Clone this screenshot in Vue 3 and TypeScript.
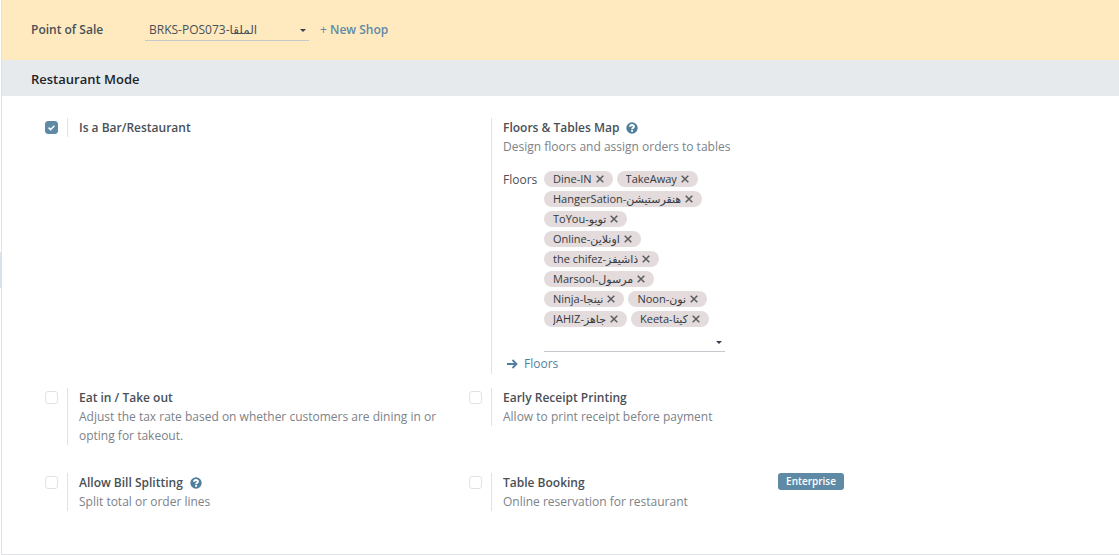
<script setup lang="ts">
import { ref } from 'vue'

interface Floor {
  id: number
  name: string
}

const shop = ref('BRKS-POS073-الملقا')
const isRestaurant = ref(true)
const eatIn = ref(false)
const earlyReceipt = ref(false)
const billSplitting = ref(false)
const tableBooking = ref(false)
const floorQuery = ref('')

const floors = ref<Floor[]>([
  { id: 1, name: 'Dine-IN' },
  { id: 2, name: 'TakeAway' },
  { id: 3, name: 'HangerSation-هنقرستيشن' },
  { id: 4, name: 'ToYou-تويو' },
  { id: 5, name: 'Online-اونلاين' },
  { id: 6, name: 'the chifez-ذاشيفز' },
  { id: 7, name: 'Marsool-مرسول' },
  { id: 8, name: 'Ninja-نينجا' },
  { id: 9, name: 'Noon-نون' },
  { id: 10, name: 'JAHIZ-جاهز' },
  { id: 11, name: 'Keeta-كيتا' },
])

function removeFloor(id: number) {
  floors.value = floors.value.filter((f) => f.id !== id)
}
</script>

<template>
  <div class="page">
    <span class="handle"></span>
    <main class="panel">
      <header class="shop-bar">
        <label class="shop-label" for="shop">Point of Sale</label>
        <div class="dropdown shop-select">
          <select id="shop" v-model="shop">
            <option>BRKS-POS073-الملقا</option>
          </select>
          <svg class="caret" viewBox="0 0 6 3"><path d="M0 0h6L3 3z" /></svg>
        </div>
        <button class="new-shop" type="button"><span class="plus">+</span> New Shop</button>
      </header>

      <h2 class="section-title">Restaurant Mode</h2>

      <div class="settings">
        <section class="setting">
          <input id="is-restaurant" v-model="isRestaurant" class="check" type="checkbox" />
          <div class="body">
            <label class="title" for="is-restaurant">Is a Bar/Restaurant</label>
          </div>
        </section>

        <section class="setting">
          <div class="body wide">
            <div class="title">
              Floors &amp; Tables Map
              <svg class="help" viewBox="0 0 12 12">
                <circle cx="6" cy="6" r="5.7" />
                <path d="M4 4.7C4.1 2.5 8 2.5 8 4.6C8 5.9 6.1 5.8 6.1 7.2" />
                <path d="M6.1 8v1.8" />
              </svg>
            </div>
            <p class="desc">Design floors and assign orders to tables</p>
            <div class="floors">
              <label class="floors-label" for="floor-input">Floors</label>
              <div class="floor-field">
                <ul class="tags">
                  <li v-for="floor in floors" :key="floor.id" class="tag">
                    <span class="tag-text">{{ floor.name }}</span>
                    <button class="remove" type="button" :aria-label="'Remove ' + floor.name" @click="removeFloor(floor.id)">
                      <svg viewBox="0 0 8 8"><path d="M.7.7l6.6 6.6M7.3.7L.7 7.3" /></svg>
                    </button>
                  </li>
                </ul>
                <div class="dropdown">
                  <input id="floor-input" v-model="floorQuery" class="floor-input" type="text" autocomplete="off" />
                  <svg class="caret" viewBox="0 0 6 3"><path d="M0 0h6L3 3z" /></svg>
                </div>
              </div>
            </div>
            <a class="floors-link" href="#">
              <svg viewBox="0 0 12 10"><path d="M1 5h9.5M6.5 1l4 4-4 4" /></svg>
              Floors
            </a>
          </div>
        </section>

        <section class="setting spaced">
          <input id="eat-in" v-model="eatIn" class="check" type="checkbox" />
          <div class="body">
            <label class="title" for="eat-in">Eat in / Take out</label>
            <p class="desc">Adjust the tax rate based on whether customers are dining in or opting for takeout.</p>
          </div>
        </section>

        <section class="setting spaced">
          <input id="early-receipt" v-model="earlyReceipt" class="check" type="checkbox" />
          <div class="body">
            <label class="title" for="early-receipt">Early Receipt Printing</label>
            <p class="desc">Allow to print receipt before payment</p>
          </div>
        </section>

        <section class="setting">
          <input id="bill-splitting" v-model="billSplitting" class="check" type="checkbox" />
          <div class="body">
            <label class="title" for="bill-splitting">
              Allow Bill Splitting
              <svg class="help" viewBox="0 0 12 12">
                <circle cx="6" cy="6" r="5.7" />
                <path d="M4 4.7C4.1 2.5 8 2.5 8 4.6C8 5.9 6.1 5.8 6.1 7.2" />
                <path d="M6.1 8v1.8" />
              </svg>
            </label>
            <p class="desc">Split total or order lines</p>
          </div>
        </section>

        <section class="setting">
          <input id="table-booking" v-model="tableBooking" class="check" type="checkbox" />
          <div class="body">
            <label class="title" for="table-booking">Table Booking</label>
            <p class="desc">Online reservation for restaurant</p>
          </div>
          <span class="badge">Enterprise</span>
        </section>
      </div>
    </main>
  </div>
</template>

<style>
body {
  margin: 0;
  background: #fff;
}
</style>

<style scoped>
.page {
  display: flex;
  min-height: 100vh;
  box-sizing: border-box;
  font-family: "Open Sans", "Noto Sans", "DejaVu Sans", sans-serif;
  font-size: 12px;
  line-height: 19px;
  color: #495057;
}

.handle {
  align-self: flex-start;
  width: 1px;
  height: 36px;
  margin-top: 252px;
  background: #d9e2ec;
}

.panel {
  flex: 1;
  min-width: 0;
  border-left: 1px solid #dee2e6;
  border-bottom: 1px solid #dee2e6;
}

input,
select,
button {
  font: inherit;
  color: inherit;
  margin: 0;
  padding: 0;
  border: 0;
  background: none;
  border-radius: 0;
}

.shop-bar {
  display: flex;
  align-items: center;
  height: 59px;
  padding-left: 29px;
  border-bottom: 1px solid #ffe9bf;
  background: #ffe9bf;
}

.shop-label {
  width: 114px;
  font-weight: 600;
}

.dropdown {
  position: relative;
  border-bottom: 1px solid #c5c9ce;
}

.shop-select {
  width: 164px;
  margin-right: 11px;
}

.shop-select select {
  display: block;
  appearance: none;
  width: 100%;
  height: 22px;
  padding-left: 4px;
  outline: none;
}

.caret {
  position: absolute;
  right: 3px;
  top: 11px;
  width: 6px;
  height: 3px;
  fill: #374151;
}

.new-shop {
  color: #5f8aa6;
  font-weight: 600;
  cursor: pointer;
}

.plus {
  font-weight: 400;
}

.section-title {
  margin: 0;
  padding: 10px 29px 7px;
  background: #e7eaed;
  color: #212529;
  font-size: 13px;
  line-height: 19px;
  font-weight: 600;
}

.settings {
  display: grid;
  grid-template-columns: repeat(2, minmax(0, 424px));
  row-gap: 14px;
  padding: 22px 28px 41px;
}

.setting {
  display: flex;
  align-items: flex-start;
  padding: 0 16px 0 15px;
}

.spaced {
  padding-bottom: 14px;
}

.check {
  appearance: none;
  flex: none;
  box-sizing: border-box;
  width: 13px;
  height: 13px;
  margin: 3px 9px 0 0;
  border: 1px solid #dee2e6;
  border-radius: 3px;
  background: #fff;
}

.check:checked {
  border-color: #5f8aa6;
  background: #5f8aa6 url("data:image/svg+xml,%3Csvg xmlns='http://www.w3.org/2000/svg' viewBox='0 0 11 11'%3E%3Cpath d='M2.6 5.6l2 2 3.8-3.8' fill='none' stroke='white' stroke-width='1.5'/%3E%3C/svg%3E") center / 11px no-repeat;
}

.body {
  flex: 1;
  min-width: 0;
  padding-left: 11px;
  border-left: 1px solid #dee2e6;
}

.wide {
  margin-left: 22px;
}

.title {
  display: flex;
  align-items: center;
  gap: 7px;
  font-weight: 600;
}

.help {
  width: 12px;
  height: 12px;
}

.help circle {
  fill: #4f7f9d;
}

.help path {
  fill: none;
  stroke: #fff;
  stroke-width: 1.9;
}

.desc {
  margin: 0;
  color: #7c8288;
}

.floors {
  display: flex;
  margin-top: 14px;
}

.floors-label {
  width: 41px;
  flex: none;
}

.floor-field {
  width: 181px;
}

.tags {
  display: flex;
  flex-wrap: wrap;
  gap: 4px;
  margin: 0;
  padding: 1px 0 0;
  list-style: none;
}

.tag {
  display: flex;
  align-items: center;
  gap: 4px;
  height: 16px;
  padding: 0 9px;
  border-radius: 8px;
  background: #e3dbdc;
  color: #343a40;
  font-size: 11px;
  line-height: 16px;
  white-space: nowrap;
}

.tag-text {
  overflow: hidden;
}

.remove {
  display: flex;
  padding-bottom: 1px;
  cursor: pointer;
}

.remove svg {
  width: 8px;
  height: 8px;
  fill: none;
  stroke: #5c5c60;
  stroke-width: 1.5;
}

.floor-input {
  display: block;
  width: 100%;
  height: 24px;
  outline: none;
}

.floor-field .caret {
  top: 14px;
}

.floors-link {
  display: flex;
  align-items: center;
  gap: 6px;
  margin-top: 2px;
  padding: 0 0 1px 3px;
  color: #4f7f9d;
  font-weight: 500;
  text-decoration: none;
}

.floors-link svg {
  width: 12px;
  height: 10px;
  fill: none;
  stroke: #4f7f9d;
  stroke-width: 1.8;
}

.badge {
  margin-right: 18px;
  padding: 0 8px;
  border-radius: 3px;
  background: #5f8aa6;
  color: #fff;
  font-size: 10px;
  line-height: 17px;
  font-weight: 600;
}
</style>
